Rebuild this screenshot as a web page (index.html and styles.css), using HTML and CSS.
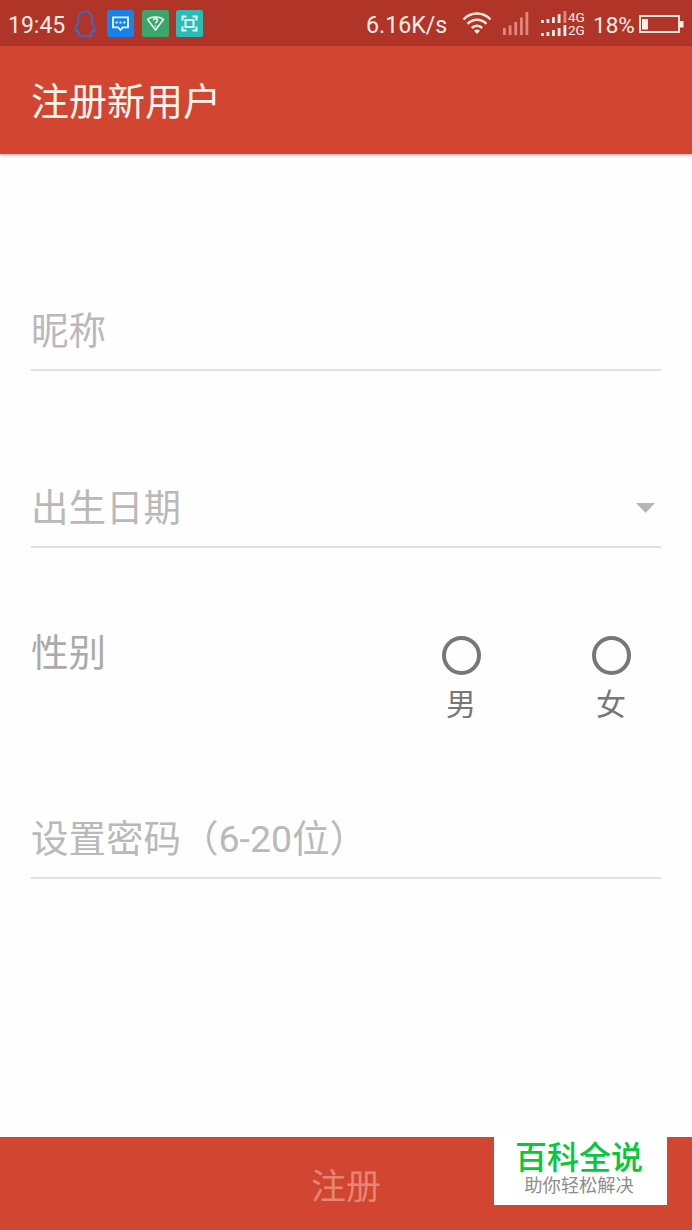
FILE: index.html
```html
<!DOCTYPE html>
<html lang="zh-CN">
<head>
<meta charset="utf-8">
<title>注册新用户</title>
<link rel="stylesheet" href="styles.css">
</head>
<body>
<div class="screen">
  <div class="status">
    <span class="time">19:45</span>
    <svg class="icon-qq" width="22" height="28" viewBox="0 0 22 28" fill="none" stroke="#4567b8" stroke-width="2" stroke-linejoin="round"><path d="M11 1.500C6.500 1.500 4.200 5 4.200 9v4C2.500 15.500 1 18.500 1.300 21c.2 1 1.200.4 2.200-1 .4 1.500 1 2.500 1.800 3.300-1.800.8-1.500 2.700.3 2.700h3.200l2.200-.6 2.200.6h3.200c1.800 0 2.100-1.900.3-2.700.8-.8 1.400-1.800 1.800-3.300 1 1.400 2 2 2.200 1 .3-2.500-1.200-5.500-2.900-8V9c0-4-2.300-7.500-6.800-7.500z"/></svg>
    <div class="apps">
      <svg width="27" height="27" viewBox="0 0 27 27" fill="none" stroke="#e9fbff" stroke-width="1.8"><rect width="27" height="27" rx="2.500" fill="#1583ea" stroke="none"/><path d="M6 7.400h15v10h-5.200L13.500 20l-2.300-2.600H6z"/><path d="M8.600 12.500h2M12.500 12.500h2M16.400 12.500h2" stroke-width="2"/></svg>
      <svg width="27" height="27" viewBox="0 0 27 27" fill="none" stroke="#eefff5" stroke-width="1.600" stroke-linejoin="round"><rect width="27" height="27" rx="2.500" fill="#3ba56a" stroke="none"/><path d="M5.500 9.300c4.500-3.100 11.500-3.100 16 0l-8 10.700z"/><path d="M11.500 10.400c0-2.500 4-2.400 4 0 0 1.500-2 1.500-2 3.200M13.500 15v1.500" stroke-width="1.500"/></svg>
      <svg width="27" height="27" viewBox="0 0 27 27" fill="none" stroke="#e4fffb" stroke-width="2"><rect width="27" height="27" rx="2.500" fill="#2bbdb5" stroke="none"/><path d="M6.500 10.500v-4h4M16.500 6.500h4v4M20.500 16.500v4h-4M10.500 20.500h-4v-4"/><rect x="9.500" y="10" width="8" height="7"/></svg>
    </div>
    <span class="speed">6.16K/s</span>
    <svg class="wifi" width="30" height="23" viewBox="0 0 30 23" fill="none" stroke="#ffe9da" stroke-width="2.500"><path d="M1.500 7.500C9-.4 21-.4 28.500 7.500M5.600 11.800c5.200-5.500 13.600-5.500 18.800 0M9.800 16c3-3 7.400-3 10.400 0"/><path d="M12 18.800c1.800-1.600 4.200-1.600 6 0l-3 3.200z" fill="#ffe9da" stroke="none"/></svg>
    <svg class="signal" width="26" height="23" viewBox="0 0 26 23" fill="#e0887c"><path d="M0 16h2.800v7H0zM5.700 13.500h2.800V23H5.700zM11.300 10h2.800v13h-2.800zM17 5.500h2.800V23H17zM22.500 0h2.800v23h-2.800z"/></svg>
    <svg class="dual" width="26" height="26" viewBox="0 0 26 26" fill="#fff0e6"><path d="M0 9h2.800v3H0zM5.500 8h2.800v4H5.500zM11 6h2.800v6H11zM16.700 3.200h2.800V12h-2.800zM0 22h2.800v3H0zM5.500 21h2.800v4H5.500zM11 19h2.800v6H11zM16.700 17h2.800v8h-2.800zM22.500 14h2.800v11h-2.800z"/><path fill="#e0887c" d="M22.500 0h2.800v12h-2.800z"/></svg>
    <span class="nets"><span>4G</span><span>2G</span></span>
    <span class="pct">18%</span>
    <svg class="battery" width="45" height="19" viewBox="0 0 45 19" fill="#fff0e6"><rect x="1" y="1" width="39" height="16" fill="none" stroke="#ffe4d8" stroke-width="2"/><path d="M3 4h6v10.500H3zM41 6h3.500v6.500H41z"/></svg>
  </div>
  <header class="appbar"><h1>注册新用户</h1></header>
  <main class="form">
    <div class="field nickname">昵称</div>
    <div class="field birthday"><span>出生日期</span><svg class="caret" width="19" height="10" viewBox="0 0 19 10"><path d="M0 0h19L9.500 10z" fill="#b5b5b5"/></svg></div>
    <div class="gender">
      <span class="gender-label">性别</span>
      <div class="option"><i class="radio"></i><span>男</span></div>
      <div class="option"><i class="radio"></i><span>女</span></div>
    </div>
    <div class="field password">设置密码（6-20位）</div>
  </main>
  <footer class="submit"><span>注册</span>
    <div class="badge"><strong>百科全说</strong><span>助你轻松解决</span></div>
  </footer>
</div>
</body>
</html>
```
FILE: styles.css
```css
* { box-sizing: border-box; }
body { margin: 0; font-family: Roboto, "Noto Sans CJK SC", sans-serif; }
.screen { width: 692px; height: 1230px; display: flex; flex-direction: column; background: #fefefe; overflow: hidden; }
.status { height: 46px; flex: none; background: #b03428; color: #ffeee4; display: flex; align-items: flex-start; padding: 10px 8px 0; font-size: 23.200px; line-height: 31px; white-space: nowrap; }
.status svg { flex: none; display: block; }
.time { width: 66px; font-size: 23px; }
.icon-qq { margin-right: 11px; }
.apps { display: flex; gap: 7.500px; width: 96px; margin-right: 163px; }
.speed { width: 96px; }
.wifi { margin: 2px 11px 0 0; }
.signal { margin: 2px 12px 0 0; }
.dual { margin: 1px 1px 0 0; }
.nets { display: flex; flex-direction: column; width: 25px; font-size: 13.500px; line-height: 13px; padding-top: 1px; }
.pct { width: 46px; font-size: 22.500px; }
.battery { margin-top: 5px; }
.appbar { flex: none; height: 108px; background: #d24530; box-shadow: 0 1px 3px rgba(120, 30, 50, .45); padding: 29px 31px 0; }
.appbar h1 { margin: 0; font-size: 38px; line-height: 54px; font-weight: 400; color: #fff4ec; }
.form { flex: 1; padding: 142px 31px 0; color: #b9b9b9; font-size: 37.500px; line-height: 56px; }
.field { height: 75px; padding-top: 7px; border-bottom: 2px solid #e0e0e0; }
.birthday { margin-top: 102px; display: flex; justify-content: space-between; }
.caret { margin: 23px 6px 0 0; }
.gender { display: flex; height: 120px; margin-top: 76px; }
.gender-label { flex: 1; color: #aaa; padding-top: 1px; }
.option { width: 40px; display: flex; flex-direction: column; align-items: center; color: #777; font-size: 30px; line-height: 40px; padding-top: 12px; }
.option + .option { margin: 0 30px 0 110px; }
.radio { width: 39px; height: 39px; border: 4px solid #777; border-radius: 50%; margin-bottom: 10px; flex: none; }
.password { margin-top: 60px; }
.submit { flex: none; height: 93px; background: #d24530; color: #e58674; font-size: 35px; line-height: 52px; text-align: center; padding-top: 25px; position: relative; }
.badge { position: absolute; left: 494px; top: 0; width: 173px; height: 68px; background: #fff; display: flex; flex-direction: column; align-items: center; padding-right: 3px; }
.badge strong { font-size: 32px; line-height: 36px; font-weight: 500; font-family: "Noto Sans CJK SC", sans-serif; color: #06c83a; }
.badge span { font-size: 18.300px; line-height: 26px; color: #8d8d8d; }
```
